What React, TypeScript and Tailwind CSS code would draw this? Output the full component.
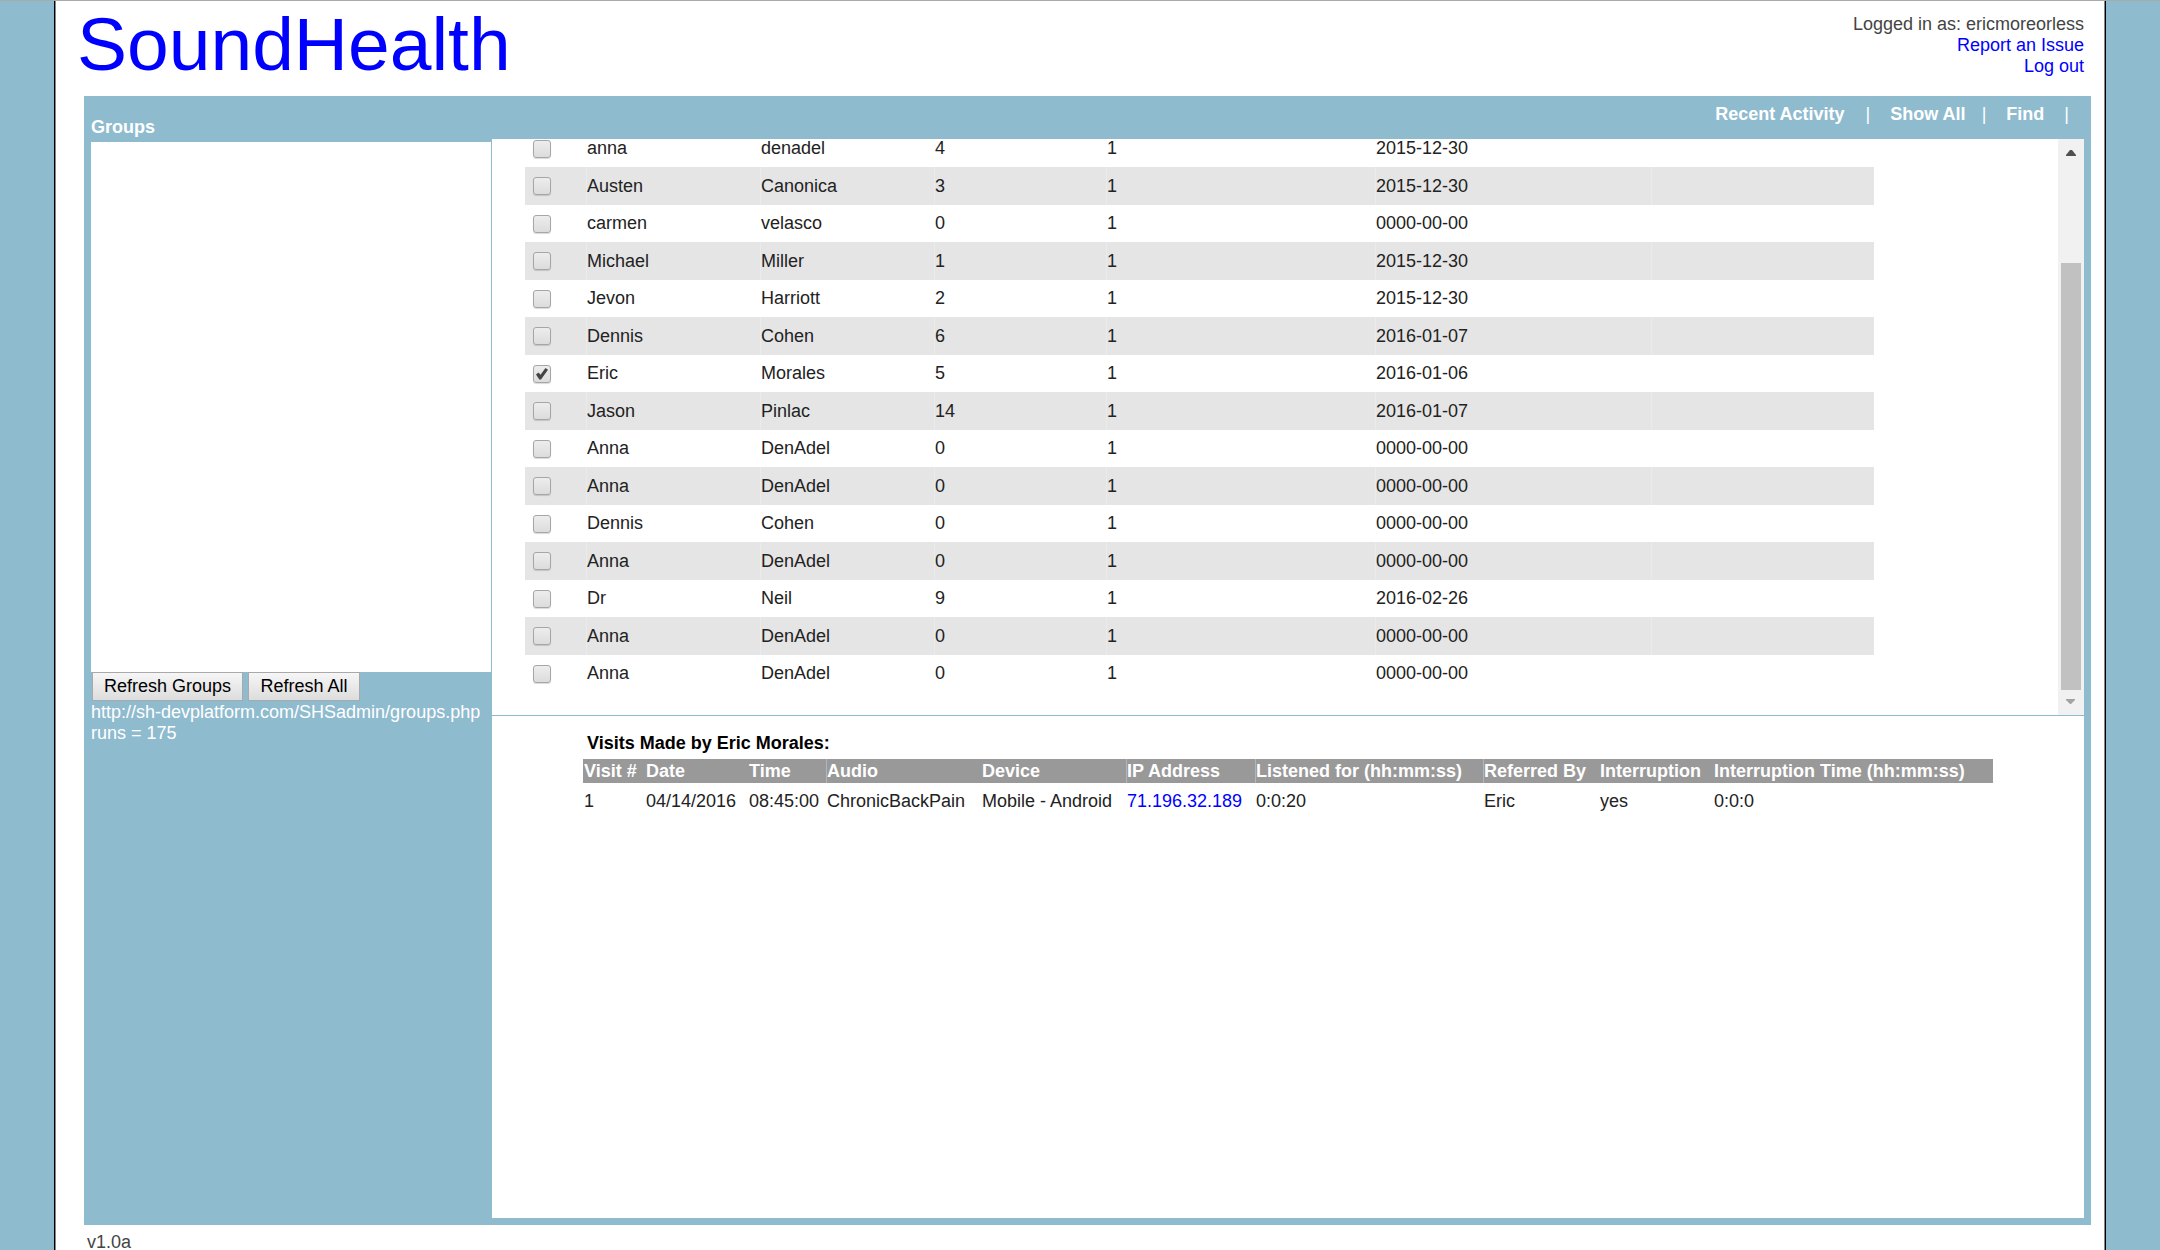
import { useState } from "react";

type Client = [first: string, last: string, visits: string, active: string, date: string];

const clients: Client[] = [
  ["anna", "denadel", "4", "1", "2015-12-30"],
  ["Austen", "Canonica", "3", "1", "2015-12-30"],
  ["carmen", "velasco", "0", "1", "0000-00-00"],
  ["Michael", "Miller", "1", "1", "2015-12-30"],
  ["Jevon", "Harriott", "2", "1", "2015-12-30"],
  ["Dennis", "Cohen", "6", "1", "2016-01-07"],
  ["Eric", "Morales", "5", "1", "2016-01-06"],
  ["Jason", "Pinlac", "14", "1", "2016-01-07"],
  ["Anna", "DenAdel", "0", "1", "0000-00-00"],
  ["Anna", "DenAdel", "0", "1", "0000-00-00"],
  ["Dennis", "Cohen", "0", "1", "0000-00-00"],
  ["Anna", "DenAdel", "0", "1", "0000-00-00"],
  ["Dr", "Neil", "9", "1", "2016-02-26"],
  ["Anna", "DenAdel", "0", "1", "0000-00-00"],
  ["Anna", "DenAdel", "0", "1", "0000-00-00"],
];

const visitColumns = [
  { label: "Visit #", style: "w-[62px] border-[#999]" },
  { label: "Date", style: "w-[103px] border-[#999]" },
  { label: "Time", style: "w-[78px] border-[#999]" },
  { label: "Audio", style: "w-[155px] border-[#b5b5b5]" },
  { label: "Device", style: "w-[145px] border-[#999]" },
  { label: "IP Address", style: "w-[129px] border-[#b5b5b5]" },
  { label: "Listened for (hh:mm:ss)", style: "w-[228px] border-[#b5b5b5]" },
  { label: "Referred By", style: "w-[116px] border-[#b5b5b5]" },
  { label: "Interruption", style: "w-[114px] border-[#999]" },
  { label: "Interruption Time (hh:mm:ss)", style: "w-[280px] border-[#999]" },
];

const visit = ["1", "04/14/2016", "08:45:00", "ChronicBackPain", "Mobile - Android", "71.196.32.189", "0:0:20", "Eric", "yes", "0:0:0"];

function Header() {
  return (
    <header className="flex h-[95px] shrink-0 items-start justify-between pr-[21px] pl-[22px]">
      <h1 className="text-[75px] leading-[86px] text-[#0000ff]">SoundHealth</h1>
      <div className="flex flex-col items-end pt-[13px] text-[#444]">
        <span>Logged in as: ericmoreorless</span>
        <a href="#report" className="text-[#0000ff]">Report an Issue</a>
        <a href="#logout" className="text-[#0000ff]">Log out</a>
      </div>
    </header>
  );
}

function TopNav() {
  return (
    <nav className="flex h-[43px] shrink-0 items-start justify-end pt-2 pr-[15px] font-bold text-white">
      <a href="#recent">Recent Activity</a>
      <span className="ml-[21px] font-normal">|</span>
      <a href="#all" className="ml-5">Show All</a>
      <span className="ml-4 font-normal">|</span>
      <a href="#find" className="ml-5">Find</a>
      <span className="ml-5 font-normal">|</span>
    </nav>
  );
}

function GroupsPanel() {
  const button =
    "h-[29px] border border-[#a9a9a9] bg-linear-to-b from-[#f6f6f6] to-[#dddddd] text-center text-[18px] leading-[21px] text-black";
  return (
    <aside className="w-[408px] shrink-0 pl-[7px] text-white">
      <h2 className="pt-[21px] pb-1 text-[18px] leading-[21px] font-bold">Groups</h2>
      <div className="mr-px h-[530px] bg-white" />
      <div className="flex gap-[5px] pb-px pl-px">
        <button type="button" className={`${button} w-[151px]`}>Refresh Groups</button>
        <button type="button" className={`${button} w-[112px]`}>Refresh All</button>
      </div>
      <p className="whitespace-nowrap">http://sh-devplatform.com/SHSadmin/groups.php</p>
      <p>runs = 175</p>
    </aside>
  );
}

function Check({ label, checked, onChange }: { label: string; checked: boolean; onChange: () => void }) {
  return (
    <span className="relative ml-2 block size-[18px]">
      <input
        type="checkbox"
        aria-label={label}
        checked={checked}
        onChange={onChange}
        className="block size-[18px] appearance-none rounded-[3px] border border-[#a6a6a6] bg-linear-to-b from-[#ededed] to-[#dcdcdc] shadow-[0_1px_1px_rgba(0,0,0,0.15)]"
      />
      {checked && (
        <svg viewBox="0 0 18 18" className="pointer-events-none absolute inset-0 size-[18px]">
          <path d="M3 9.5 L5.5 7.5 L7.5 9.7 L12.5 3 L15 4.8 L8 14.5 L6.3 14.5 Z" fill="#444" />
        </svg>
      )}
    </span>
  );
}

function ScrollBar() {
  return (
    <div className="flex w-[26px] shrink-0 flex-col items-center bg-[#f1f1f1]" aria-hidden="true">
      <svg viewBox="0 0 26 26" className="size-[26px] shrink-0">
        <path d="M8 17v-1l4-5h2l4 5v1z" fill="#505050" />
      </svg>
      <div className="flex w-5 grow flex-col justify-end">
        <div className="h-[427px] bg-[#c1c1c1]" />
      </div>
      <svg viewBox="0 0 26 25" className="h-[25px] w-[26px] shrink-0">
        <path d="M8 9h9v1l-4 4h-1l-4-4z" fill="#a3a3a3" />
      </svg>
    </div>
  );
}

function ClientList() {
  const [selected, setSelected] = useState(6);
  const cell = "border-l border-transparent p-0 group-even:border-[#ebebeb]";
  return (
    <section className="flex h-[576px] shrink-0 bg-white">
      <div className="flex grow flex-col justify-end overflow-hidden pb-[23px] pl-[33px]">
        <table className="w-[1349px] table-fixed border-separate border-spacing-0 text-left text-[#222]">
          <colgroup>
            <col className="w-[61px]" />
            <col className="w-[174px]" />
            <col className="w-[174px]" />
            <col className="w-[172px]" />
            <col className="w-[269px]" />
            <col className="w-[276px]" />
            <col />
          </colgroup>
          <tbody>
            {clients.map(([first, last, visits, active, date], i) => (
              <tr key={i} className="group h-[37px] even:h-[38px] even:bg-[#e5e5e5]">
                <td className="p-0">
                  <Check label={`${first} ${last}`} checked={selected === i} onChange={() => setSelected(i)} />
                </td>
                <td className={cell}>{first}</td>
                <td className={cell}>{last}</td>
                <td className={cell}>{visits}</td>
                <td className={cell}>{active}</td>
                <td className={cell}>{date}</td>
                <td className={cell} />
              </tr>
            ))}
          </tbody>
        </table>
      </div>
      <ScrollBar />
    </section>
  );
}

function Visits() {
  return (
    <section className="grow border-t border-[#8fbbcf] bg-white pt-[17px] pl-[91px]">
      <h2 className="pb-[5px] pl-1 font-bold text-black">Visits Made by Eric Morales:</h2>
      <table className="w-[1410px] table-fixed border-separate border-spacing-0 text-left whitespace-nowrap text-[#222]">
        <thead>
          <tr className="h-6 bg-[#999] text-white">
            {visitColumns.map((c) => (
              <th key={c.label} className={`${c.style} border-l p-0 font-bold`}>{c.label}</th>
            ))}
          </tr>
        </thead>
        <tbody>
          <tr className="h-[37px]">
            {visit.map((v, i) => (
              <td key={i} className="p-0 pl-px">
                {i === 5 ? <a href="#ip" className="text-[#0000ff]">{v}</a> : v}
              </td>
            ))}
          </tr>
        </tbody>
      </table>
    </section>
  );
}

export default function App() {
  return (
    <div className="h-screen overflow-hidden border-t border-[#a9a9a9] bg-[#8fbbcf] px-[54px] font-['Liberation_Sans',Arial,sans-serif] text-[18px] leading-[21px]">
      <div className="flex h-full flex-col border-x border-black bg-white shadow-[inset_1px_0_0_#888,inset_-1px_0_0_#888]">
        <Header />
        <main className="mr-[14px] ml-[29px] flex h-[1129px] shrink-0 bg-[#8fbbcf]">
          <GroupsPanel />
          <div className="flex min-w-0 grow flex-col pr-[7px] pb-[7px]">
            <TopNav />
            <ClientList />
            <Visits />
          </div>
        </main>
        <footer className="shrink-0 pt-[7px] pl-8 text-[#444]">v1.0a</footer>
      </div>
    </div>
  );
}
